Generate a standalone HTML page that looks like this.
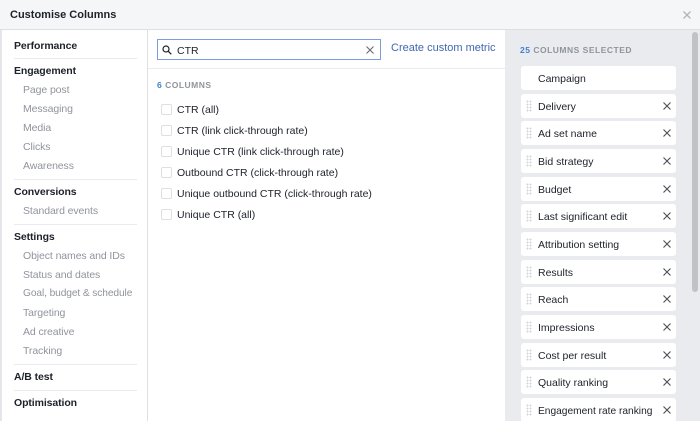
<!DOCTYPE html>
<html><head><style>
*{box-sizing:border-box;margin:0;padding:0}
body{width:700px;height:421px;overflow:hidden;font-family:"Liberation Sans",Arial,sans-serif;background:#fff;position:relative;color:#1d2129}
.hdr{position:absolute;left:0;top:0;width:700px;height:30px;background:#f5f6f7;border-bottom:1px solid #dddfe2;font-size:11px;font-weight:bold;padding:9px 0 0 10px}
.close{position:absolute;right:9px;top:11px}
.side{position:absolute;left:0;top:30px;width:148px;height:391px;border-right:1px solid #dddfe2;border-left:2px solid #e5e6e9}
.side div{position:absolute;left:12px;font-size:10.5px;white-space:nowrap;letter-spacing:-0.1px}
.side .h{font-weight:bold;color:#1d2129}
.side .s{left:21px;color:#90949c}
.side .ln{left:12px;width:123px;height:1px;background:#e9ebee}
.mid{position:absolute;left:148px;top:30px;width:357px;height:391px}
.search{position:absolute;left:9px;top:9px;width:224px;height:21px;border:1px solid #7b9ee0;font-size:10.5px;padding:5px 0 0 19px}
.mid .sep{position:absolute;left:0;top:38px;width:357px;height:1px;background:#e9ebee}
.link{position:absolute;left:243px;top:12px;font-size:11px;color:#4267b2}
.cnt{position:absolute;left:9px;top:50px;font-size:8.5px;font-weight:bold;color:#90949c;letter-spacing:.5px}
.cnt b,.rcnt b{color:#4080d0}
.opt{position:absolute;left:13px;font-size:10.5px;color:#1d2129}
.opt i{position:absolute;left:0;top:0;width:11px;height:11px;border:1px solid #dddfe2;border-radius:2px}
.opt span{padding-left:16px}
.right{position:absolute;left:505px;top:30px;width:195px;height:391px;background:#e9ebee}
.rcnt{position:absolute;left:15px;top:15px;font-size:8.5px;font-weight:bold;color:#90949c;letter-spacing:.5px}
.it{position:absolute;left:16px;width:155px;height:24px;background:#fff;border-radius:3px;font-size:10.5px;padding:7px 0 0 17px;color:#1d2129;white-space:nowrap}
.it .g{position:absolute;left:5px;top:6px;width:6px;height:12px;background-image:radial-gradient(circle,#d3d5d9 0.9px,transparent 1.1px);background-size:3px 3px}
.it svg{position:absolute;right:5px;top:8px}
.sb{position:absolute;left:692px;top:32px;width:6px;height:260px;background:#c0c2c6;border-radius:3px}
</style></head><body>
<div class="hdr">Customise Columns<svg class="close" width="8" height="8" viewBox="0 0 8 8"><path d="M0.5 0.5L7.5 7.5M7.5 0.5L0.5 7.5" stroke="#b0b3b8" stroke-width="1.3"/></svg></div>
<div class="side">
<div class="h" style="top:10px">Performance</div>
<div class="ln" style="top:28px"></div>
<div class="h" style="top:35px">Engagement</div>
<div class="s" style="top:54px">Page post</div>
<div class="s" style="top:73px">Messaging</div>
<div class="s" style="top:92px">Media</div>
<div class="s" style="top:111px">Clicks</div>
<div class="s" style="top:130px">Awareness</div>
<div class="ln" style="top:149px"></div>
<div class="h" style="top:156px">Conversions</div>
<div class="s" style="top:175px">Standard events</div>
<div class="ln" style="top:194px"></div>
<div class="h" style="top:201px">Settings</div>
<div class="s" style="top:220px">Object names and IDs</div>
<div class="s" style="top:239px">Status and dates</div>
<div class="s" style="top:258px;font-size:10.2px">Goal, budget &amp; schedule</div>
<div class="s" style="top:277px">Targeting</div>
<div class="s" style="top:296px">Ad creative</div>
<div class="s" style="top:315px">Tracking</div>
<div class="ln" style="top:334px"></div>
<div class="h" style="top:341px">A/B test</div>
<div class="ln" style="top:360px"></div>
<div class="h" style="top:367px">Optimisation</div>
</div>
<div class="mid">
<div class="search"><svg style="position:absolute;left:4px;top:5px" width="10" height="10" viewBox="0 0 10 10"><circle cx="4" cy="4" r="3" fill="none" stroke="#1d2129" stroke-width="1.2"/><line x1="6.2" y1="6.2" x2="9.3" y2="9.3" stroke="#1d2129" stroke-width="1.3"/></svg>CTR<svg style="position:absolute;right:6px;top:6px" width="8" height="8" viewBox="0 0 8 8"><path d="M0.5 0.5L7.5 7.5M7.5 0.5L0.5 7.5" stroke="#606770" stroke-width="1"/></svg></div>
<div class="link">Create custom metric</div>
<div class="sep"></div>
<div class="cnt"><b>6</b> COLUMNS</div>
<div class="opt" style="top:74px"><i></i><span>CTR (all)</span></div>
<div class="opt" style="top:95px"><i></i><span>CTR (link click-through rate)</span></div>
<div class="opt" style="top:116px"><i></i><span>Unique CTR (link click-through rate)</span></div>
<div class="opt" style="top:137px"><i></i><span>Outbound CTR (click-through rate)</span></div>
<div class="opt" style="top:158px"><i></i><span>Unique outbound CTR (click-through rate)</span></div>
<div class="opt" style="top:179px"><i></i><span>Unique CTR (all)</span></div>
</div>
<div class="right">
<div class="rcnt"><b>25</b> COLUMNS SELECTED</div>
<div class="it" style="top:36px">Campaign</div>
<div class="it" style="top:64px"><i class="g"></i>Delivery<svg width="8" height="8" viewBox="0 0 8 8"><path d="M0.5 0.5L7.5 7.5M7.5 0.5L0.5 7.5" stroke="#4b4f56" stroke-width="1.1"/></svg></div>
<div class="it" style="top:91px"><i class="g"></i>Ad set name<svg width="8" height="8" viewBox="0 0 8 8"><path d="M0.5 0.5L7.5 7.5M7.5 0.5L0.5 7.5" stroke="#4b4f56" stroke-width="1.1"/></svg></div>
<div class="it" style="top:119px"><i class="g"></i>Bid strategy<svg width="8" height="8" viewBox="0 0 8 8"><path d="M0.5 0.5L7.5 7.5M7.5 0.5L0.5 7.5" stroke="#4b4f56" stroke-width="1.1"/></svg></div>
<div class="it" style="top:147px"><i class="g"></i>Budget<svg width="8" height="8" viewBox="0 0 8 8"><path d="M0.5 0.5L7.5 7.5M7.5 0.5L0.5 7.5" stroke="#4b4f56" stroke-width="1.1"/></svg></div>
<div class="it" style="top:174px"><i class="g"></i>Last significant edit<svg width="8" height="8" viewBox="0 0 8 8"><path d="M0.5 0.5L7.5 7.5M7.5 0.5L0.5 7.5" stroke="#4b4f56" stroke-width="1.1"/></svg></div>
<div class="it" style="top:202px"><i class="g"></i>Attribution setting<svg width="8" height="8" viewBox="0 0 8 8"><path d="M0.5 0.5L7.5 7.5M7.5 0.5L0.5 7.5" stroke="#4b4f56" stroke-width="1.1"/></svg></div>
<div class="it" style="top:230px"><i class="g"></i>Results<svg width="8" height="8" viewBox="0 0 8 8"><path d="M0.5 0.5L7.5 7.5M7.5 0.5L0.5 7.5" stroke="#4b4f56" stroke-width="1.1"/></svg></div>
<div class="it" style="top:257px"><i class="g"></i>Reach<svg width="8" height="8" viewBox="0 0 8 8"><path d="M0.5 0.5L7.5 7.5M7.5 0.5L0.5 7.5" stroke="#4b4f56" stroke-width="1.1"/></svg></div>
<div class="it" style="top:285px"><i class="g"></i>Impressions<svg width="8" height="8" viewBox="0 0 8 8"><path d="M0.5 0.5L7.5 7.5M7.5 0.5L0.5 7.5" stroke="#4b4f56" stroke-width="1.1"/></svg></div>
<div class="it" style="top:313px"><i class="g"></i>Cost per result<svg width="8" height="8" viewBox="0 0 8 8"><path d="M0.5 0.5L7.5 7.5M7.5 0.5L0.5 7.5" stroke="#4b4f56" stroke-width="1.1"/></svg></div>
<div class="it" style="top:340px"><i class="g"></i>Quality ranking<svg width="8" height="8" viewBox="0 0 8 8"><path d="M0.5 0.5L7.5 7.5M7.5 0.5L0.5 7.5" stroke="#4b4f56" stroke-width="1.1"/></svg></div>
<div class="it" style="top:368px"><i class="g"></i><span style="font-size:10.2px">Engagement rate ranking</span><svg width="8" height="8" viewBox="0 0 8 8"><path d="M0.5 0.5L7.5 7.5M7.5 0.5L0.5 7.5" stroke="#4b4f56" stroke-width="1.1"/></svg></div>
</div>
<div class="sb"></div>
</body></html>
